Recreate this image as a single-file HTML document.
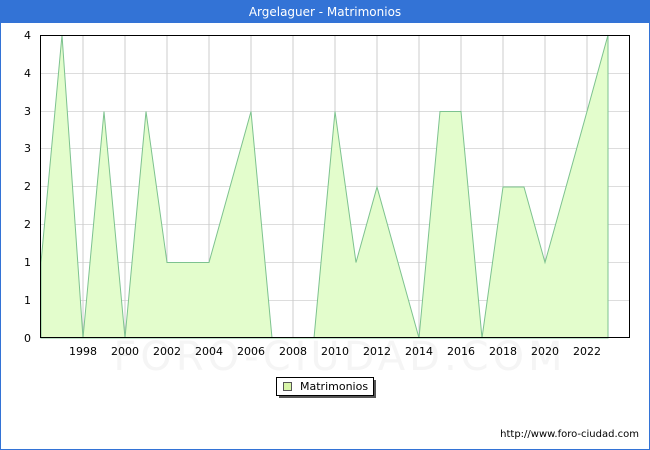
<html><body style="margin:0;width:650px;height:450px;overflow:hidden;background:#fff;font-family:'DejaVu Sans','Liberation Sans',sans-serif">
<svg width="650" height="450" xmlns="http://www.w3.org/2000/svg" style="display:block">
<rect x="0.5" y="0.5" width="649" height="449" fill="#fff" stroke="#3373d6"/>
<rect x="0" y="0" width="650" height="23" fill="#3373d6"/>
<text x="325" y="16" fill="#fff" font-size="12" text-anchor="middle" font-family="DejaVu Sans, sans-serif">Argelaguer - Matrimonios</text>
<g stroke="#dddddd" stroke-width="1">
<line x1="40" x2="630" y1="73.5" y2="73.5"/><line x1="40" x2="630" y1="111.5" y2="111.5"/><line x1="40" x2="630" y1="148.5" y2="148.5"/><line x1="40" x2="630" y1="186.5" y2="186.5"/><line x1="40" x2="630" y1="224.5" y2="224.5"/><line x1="40" x2="630" y1="262.5" y2="262.5"/><line x1="40" x2="630" y1="300.5" y2="300.5"/>
</g>
<g stroke="#cccccc" stroke-width="1">
<line x1="83" x2="83" y1="35" y2="338"/><line x1="125" x2="125" y1="35" y2="338"/><line x1="167" x2="167" y1="35" y2="338"/><line x1="209" x2="209" y1="35" y2="338"/><line x1="251" x2="251" y1="35" y2="338"/><line x1="293" x2="293" y1="35" y2="338"/><line x1="335" x2="335" y1="35" y2="338"/><line x1="377" x2="377" y1="35" y2="338"/><line x1="419" x2="419" y1="35" y2="338"/><line x1="461" x2="461" y1="35" y2="338"/><line x1="503" x2="503" y1="35" y2="338"/><line x1="545" x2="545" y1="35" y2="338"/><line x1="587" x2="587" y1="35" y2="338"/>
</g>
<text x="340" y="370" font-size="40" fill="#f5f5f5" text-anchor="middle" letter-spacing="4">FORO-CIUDAD.COM</text>
<polygon fill="#e3fdcc" stroke="#7dc28f" stroke-width="1" points="41,338 41,262.5 62,35 83,338 104,111.5 125,338 146,111.5 167,262.5 188,262.5 209,262.5 230,187 251,111.5 272,338 293,338 314,338 335,111.5 356,262.5 377,187 398,262.5 419,338 440,111.5 461,111.5 482,338 503,187 524,187 545,262.5 566,187 587,111.5 608,35 608,338"/>
<rect x="40.5" y="35.5" width="589" height="302" fill="none" stroke="#000"/>
<g font-size="11" fill="#000" text-anchor="end">
<text x="31" y="39">4</text><text x="31" y="77">4</text><text x="31" y="115">3</text><text x="31" y="152">3</text><text x="31" y="190">2</text><text x="31" y="228">2</text><text x="31" y="266">1</text><text x="31" y="304">1</text><text x="31" y="342">0</text>
</g>
<g font-size="11" fill="#000" text-anchor="middle">
<text x="83" y="355">1998</text><text x="125" y="355">2000</text><text x="167" y="355">2002</text><text x="209" y="355">2004</text><text x="251" y="355">2006</text><text x="293" y="355">2008</text><text x="335" y="355">2010</text><text x="377" y="355">2012</text><text x="419" y="355">2014</text><text x="461" y="355">2016</text><text x="503" y="355">2018</text><text x="545" y="355">2020</text><text x="587" y="355">2022</text>
</g>
<rect x="279" y="380" width="97" height="18" fill="#555"/>
<rect x="276.5" y="377.5" width="97" height="18" fill="#fff" stroke="#000"/>
<rect x="283.5" y="382.5" width="8" height="8" fill="#d8f5a8" stroke="#555"/>
<text x="300" y="390" font-size="11" fill="#000">Matrimonios</text>
<text x="639" y="437" font-size="10" fill="#000" text-anchor="end">http://www.foro-ciudad.com</text>
</svg>
</body></html>
